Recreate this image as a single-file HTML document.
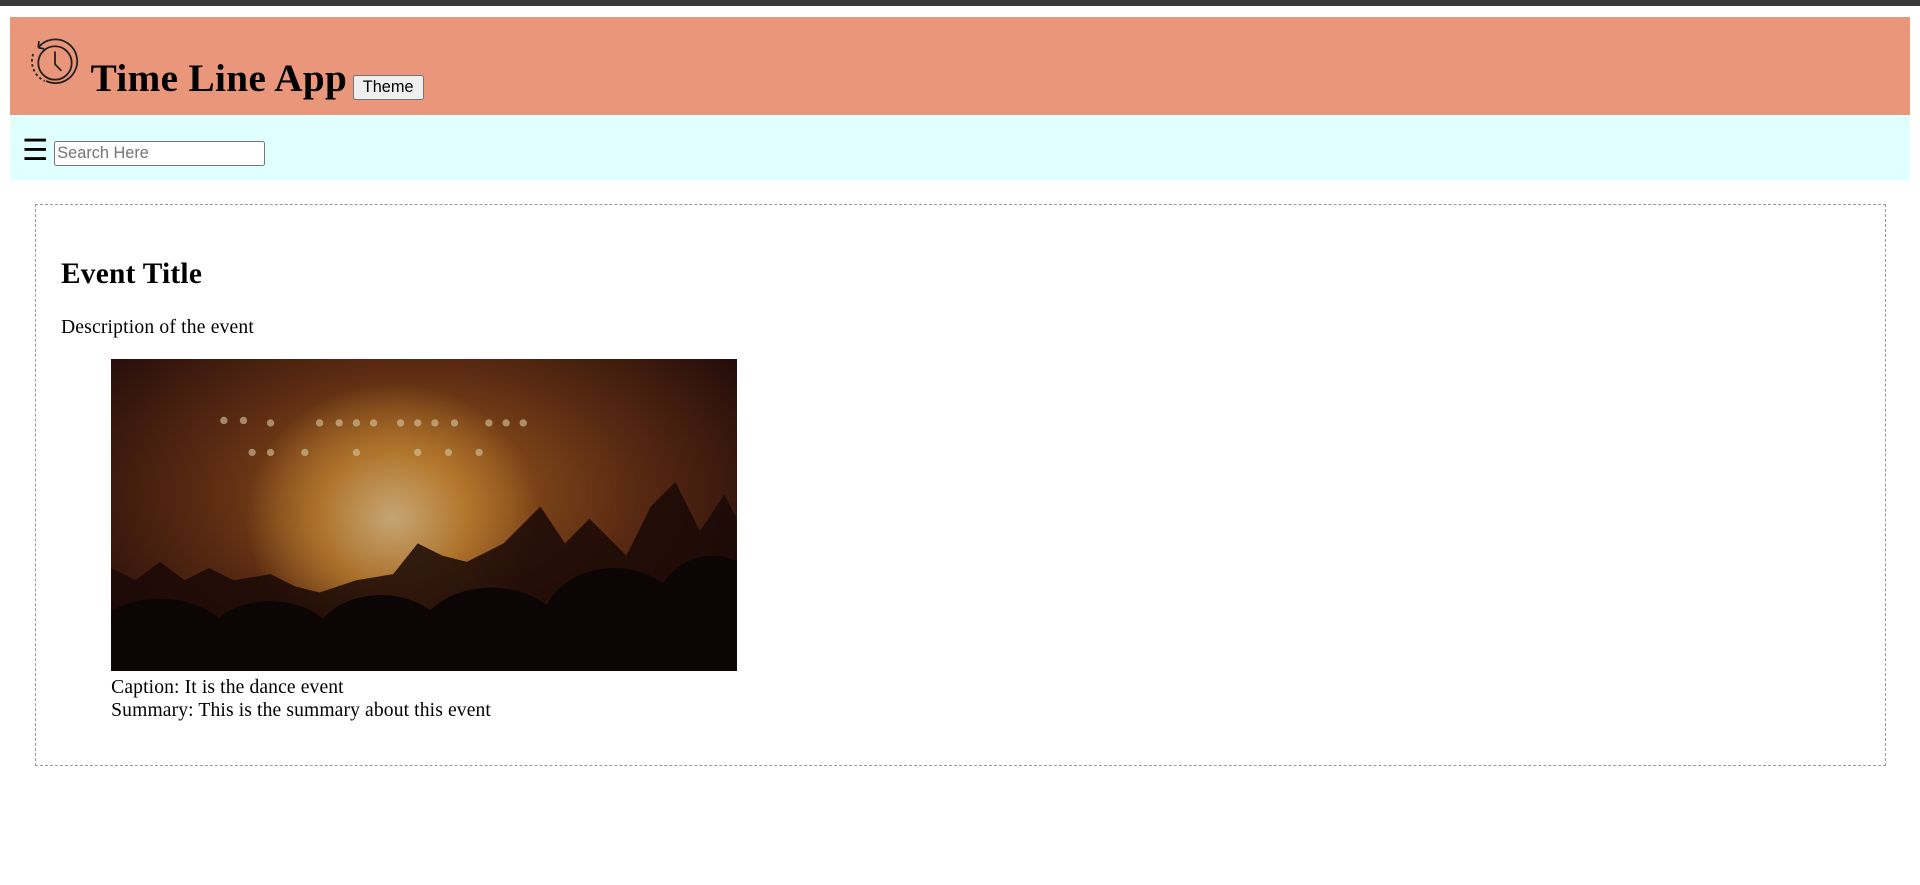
<!DOCTYPE html>
<html><head><meta charset="utf-8">
<style>
html{zoom:1.2245}
body{margin:0 8px 8px 8px;padding-top:14px;font-family:"Liberation Serif",serif;font-size:16px;color:#000;background:#fff}
.topbar{position:absolute;left:0;top:0;width:100%;height:5px;background:#3a3a3a}
header{position:relative;height:80px;background:#e9967a}
header svg{position:absolute;left:15px;top:15px}
header h1{position:absolute;left:66px;top:34px;margin:0;font-size:32px;line-height:32px;font-weight:bold;white-space:nowrap;letter-spacing:.3px}
header button{position:absolute;left:280px;top:47px;height:21px;width:58px;font:13.33px "Liberation Sans",sans-serif;background:#efefef;border:1px solid #767676;border-radius:2px;padding:0}
nav{height:53px;background:#e0ffff;position:relative}
nav .ham{position:absolute;left:10px;top:15px;font-size:24px;line-height:28px;font-family:"DejaVu Sans",sans-serif}
nav input{position:absolute;left:36px;top:21px;width:167px;height:17px;padding:1px 2px;border:1px solid #767676;border-radius:2px;font:13.33px "Liberation Sans",sans-serif}
nav input::placeholder{color:#757575}
.box{margin:20px 20px 0 21px;border:1px dashed #999;padding:20px 20px 19px}
h2{margin:22px 0 21px;font-size:24px;line-height:28px;letter-spacing:.2px}
p{margin:16px 0;line-height:18px;letter-spacing:.15px}
figure{margin:16px 40px 16px 41px}
.img{display:inline-block;vertical-align:baseline;width:511px;height:255px;position:relative;overflow:hidden;background:
radial-gradient(ellipse 120px 110px at 230px 130px,rgba(200,170,120,.95),rgba(190,130,50,.75) 50%,rgba(0,0,0,0) 100%),
radial-gradient(ellipse 320px 190px at 250px 110px,#a0601e,#5a2a12 55%,#220c0a 100%)}
figcaption{line-height:19px;margin-top:-1px;letter-spacing:.1px}
</style></head><body>
<div class="topbar"></div>
<header>
<svg width="42" height="42" viewBox="0 0 40 40" fill="none" stroke="#222" stroke-width="1.4">
<path d="M8 9 A17 17 0 1 1 14 35" />
<path d="M4 14 A17 17 0 0 0 13 35" stroke-dasharray="2 2"/>
<path d="M8 9 L8.5 4 M8 9 L12.5 10" />
<circle cx="21" cy="21" r="13"/>
<path d="M21 12 V22 L26 27"/>
</svg>
<h1>Time Line App</h1>
<button>Theme</button>
</header>
<nav><span class="ham">☰</span><input placeholder="Search Here"></nav>
<div class="box">
<h2>Event Title</h2>
<p>Description of the event</p>
<figure><div class="img">
<svg width="511" height="255" viewBox="0 0 510 254" preserveAspectRatio="none" style="position:absolute;left:0;top:0">
<g fill="#d8c8a0" opacity=".6">
<circle cx="92" cy="50" r="3"/><circle cx="108" cy="50" r="3"/><circle cx="130" cy="52" r="3"/><circle cx="170" cy="52" r="3"/><circle cx="186" cy="52" r="3"/><circle cx="200" cy="52" r="3"/><circle cx="214" cy="52" r="3"/><circle cx="236" cy="52" r="3"/><circle cx="250" cy="52" r="3"/><circle cx="264" cy="52" r="3"/><circle cx="280" cy="52" r="3"/><circle cx="308" cy="52" r="3"/><circle cx="322" cy="52" r="3"/><circle cx="336" cy="52" r="3"/>
<circle cx="115" cy="76" r="3"/><circle cx="130" cy="76" r="3"/><circle cx="158" cy="76" r="3"/><circle cx="200" cy="76" r="3"/><circle cx="250" cy="76" r="3"/><circle cx="275" cy="76" r="3"/><circle cx="300" cy="76" r="3"/>
</g>
<path d="M0 254 V170 L20 180 L40 165 L60 180 L80 170 L100 180 L130 175 L150 185 L170 190 L200 180 L230 175 L250 150 L270 160 L290 165 L320 150 L350 120 L370 150 L390 130 L420 160 L440 120 L460 100 L480 140 L500 110 L510 130 V254 Z" fill="#1a0806" opacity=".85"/>
<g fill="#0c0506">
<ellipse cx="40" cy="235" rx="60" ry="40"/><ellipse cx="130" cy="235" rx="55" ry="38"/><ellipse cx="220" cy="232" rx="55" ry="40"/><ellipse cx="310" cy="228" rx="60" ry="42"/><ellipse cx="410" cy="220" rx="60" ry="50"/><ellipse cx="490" cy="215" rx="50" ry="55"/>
<rect x="0" y="238" width="510" height="16"/>
</g>
</svg>
</div>
<figcaption>Caption: It is the dance event<br>Summary: This is the summary about this event</figcaption>
</figure>
</div>
</body></html>
